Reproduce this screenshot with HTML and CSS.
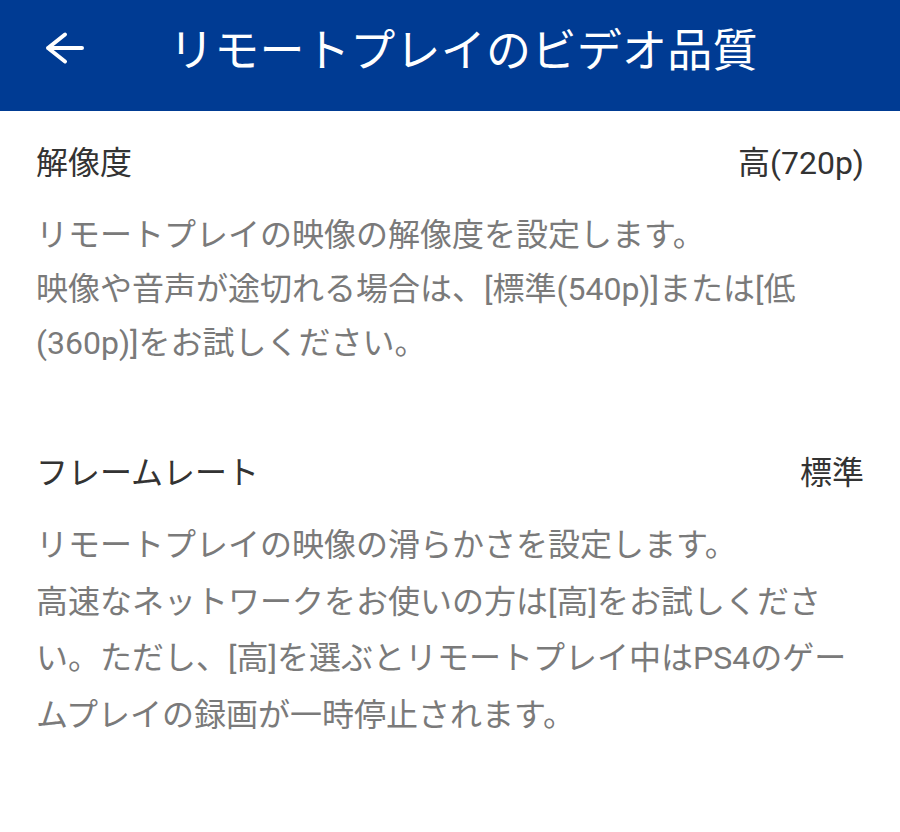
FILE: index.html
```html
<!DOCTYPE html>
<html lang="ja">
<head>
<meta charset="utf-8">
<title>リモートプレイのビデオ品質</title>
<link rel="stylesheet" href="styles.css">
</head>
<body>
<header class="appbar">
  <button class="back" aria-label="戻る">
    <svg viewBox="0 0 40 34" width="40" height="34" aria-hidden="true">
      <path d="M4 17H38M21 3.5L4 17L21 30.5" fill="none" stroke="#fff" stroke-width="4" stroke-linecap="round" stroke-linejoin="round"/>
    </svg>
  </button>
  <h1 class="title">リモートプレイのビデオ品質</h1>
</header>
<main class="content">
  <section class="setting setting-resolution">
    <div class="setting-row">
      <span class="setting-name">解像度</span>
      <span class="setting-value">高(720p)</span>
    </div>
    <p class="setting-desc">リモートプレイの映像の解像度を設定します。<br>映像や音声が途切れる場合は、[標準(540p)]または[低(360p)]をお試しください。</p>
  </section>
  <section class="setting setting-framerate">
    <div class="setting-row">
      <span class="setting-name">フレームレート</span>
      <span class="setting-value">標準</span>
    </div>
    <p class="setting-desc">リモートプレイの映像の滑らかさを設定します。<br>高速なネットワークをお使いの方は[高]をお試しください。ただし、[高]を選ぶとリモートプレイ中はPS4のゲームプレイの録画が一時停止されます。</p>
  </section>
</main>
</body>
</html>
```

FILE: styles.css
```css
html, body {
  margin: 0;
  padding: 0;
  background: #ffffff;
}

body {
  font-family: Roboto, "Noto Sans CJK JP", "Noto Sans", sans-serif;
  width: 900px;
  height: 832px;
  overflow: hidden;
}

.appbar {
  height: 111px;
  box-sizing: border-box;
  background: #003b93;
  display: flex;
  align-items: center;
  padding: 0 0 16px 44px;
}

.back {
  display: flex;
  align-items: center;
  justify-content: center;
  width: 40px;
  height: 34px;
  padding: 0;
  margin: 0;
  border: 0;
  background: transparent;
}

.back svg {
  display: block;
}

.title {
  margin: 0 0 0 85px;
  font-family: "Noto Sans CJK JP", sans-serif;
  font-size: 45px;
  font-weight: 400;
  line-height: 60px;
  color: #ffffff;
  letter-spacing: 0.3px;
}

.content {
  padding: 30px 36px 0 36px;
}

.setting + .setting {
  margin-top: 81px;
}

.setting-row {
  display: flex;
  justify-content: space-between;
  align-items: center;
  font-size: 32px;
  line-height: 44px;
  color: #333333;
}

.setting-desc {
  margin: 23px 0 0 0;
  font-size: 32px;
  line-height: 54px;
  color: #7a7a7a;
}

.setting-framerate .setting-desc {
  margin-top: 22px;
  line-height: 56.5px;
}
```
